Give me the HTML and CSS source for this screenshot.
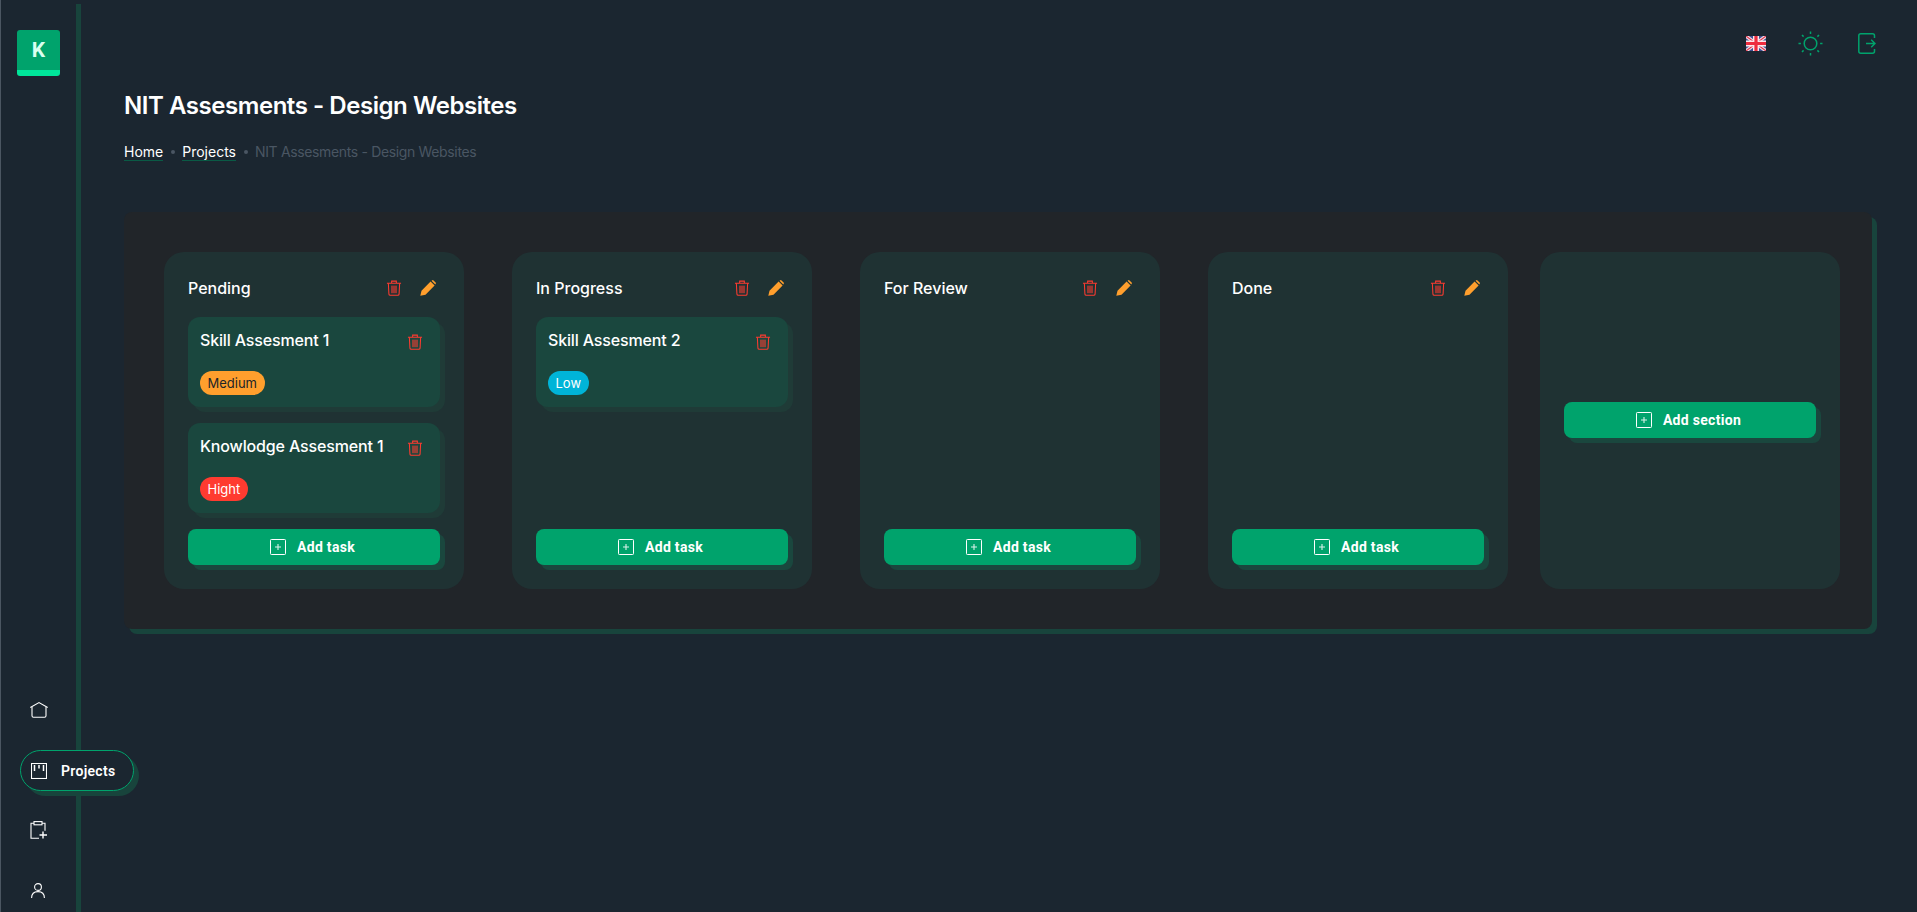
FILE: index.html
```html
<!DOCTYPE html>
<html lang="en">

<head>
    <meta charset="UTF-8">
    <meta name="viewport" content="width=device-width, initial-scale=1.0">
    <title>NIT Assesments - Design Websites</title>
    <link rel="stylesheet" href="styles.css">
</head>

<body>
    <svg class="sprite" xmlns="http://www.w3.org/2000/svg">
        <symbol id="i-trash" viewBox="0 0 16 17">
            <path d="M0.5 3.5h15M5.5 3.5V1.2h5v2.3" fill="none" stroke="currentColor" stroke-width="1.1" />
            <path d="M2 3.5l0.6 11.5q0.1 1.3 1.4 1.3h8q1.3 0 1.4-1.3L14 3.5" fill="none" stroke="currentColor" stroke-width="1.1" />
            <rect x="4.8" y="6" width="6.4" height="8" fill="currentColor" opacity="0.55" />
        </symbol>
        <symbol id="i-pencil" viewBox="0 0 16 16">
            <path d="M0.3 15.7l1.2-5L10.6 1.6l4 4-9.1 9.1zM11.5 0.7l0.9-0.5q0.6-0.3 1.1 0.2l2.1 2.1q0.5 0.5 0.2 1.1l-0.5 0.9z" fill="currentColor" />
        </symbol>
        <symbol id="i-plus" viewBox="0 0 16 16">
            <rect x="0.5" y="0.5" width="15" height="15" rx="0.8" fill="none" stroke="currentColor" />
            <path d="M8 5v6M5 8h6" stroke="currentColor" stroke-width="1.1" opacity="0.85" />
        </symbol>
    </svg>

    <div class="app">
        <aside class="sidebar">
            <div class="logo"><span>K</span></div>
            <nav class="menu">
                <a class="menu-item" href="#">
                    <svg class="menu-icon" viewBox="0 0 18 16" fill="none" stroke="currentColor" stroke-width="1.1">
                        <path d="M0.3 5.5L9 0.6l8.7 4.9" />
                        <path d="M2 5v8.8q0 1.5 1.5 1.5h11q1.5 0 1.5-1.5V5" />
                    </svg>
                </a>
                <a class="menu-item active" href="#">
                    <svg class="menu-icon" viewBox="0 0 16 16" fill="none" stroke="currentColor" stroke-width="1.1">
                        <rect x="0.5" y="0.5" width="15" height="15" />
                        <path d="M3.5 2v6M8 2v3.5M12.5 2v6" stroke-width="1.5" />
                    </svg>
                    <span>Projects</span>
                </a>
                <a class="menu-item" href="#">
                    <svg class="menu-icon" viewBox="0 0 18 18" fill="none" stroke="currentColor" stroke-width="1.1">
                        <path d="M4 2.2H1v15h8M12 2.2h3v7.5" />
                        <rect x="4" y="0.6" width="8" height="3.2" />
                        <path d="M13 10.5v7M9.5 14h7.5" stroke-width="1.4" />
                    </svg>
                </a>
                <a class="menu-item" href="#">
                    <svg class="menu-icon user" viewBox="0 0 14 15" fill="none" stroke="currentColor" stroke-width="1.1">
                        <circle cx="7" cy="4" r="3.4" />
                        <path d="M0.6 15q0-6.4 6.4-6.4T13.4 15" />
                    </svg>
                </a>
            </nav>
        </aside>

        <main class="content">
            <header class="topbar">
                <svg class="flag" viewBox="0 0 20 15">
                    <rect width="20" height="15" fill="#3d4f94" />
                    <path d="M0 0l20 15M20 0L0 15" stroke="#f3dbe3" stroke-width="3.4" />
                    <path d="M0 0l20 15M20 0L0 15" stroke="#e0364c" stroke-width="1.1" />
                    <path d="M10 0v15M0 7.5h20" stroke="#fbe7ea" stroke-width="6" />
                    <path d="M10 0v15M0 7.5h20" stroke="#ee2c3e" stroke-width="3.2" />
                </svg>
                <svg class="top-icon sun" viewBox="0 0 25 25" fill="none" stroke="currentColor">
                    <circle cx="12.5" cy="12.5" r="6.3" stroke-width="1.5" />
                    <path d="M12.5 0.5v2.4M12.5 22.1v2.4M0.5 12.5h2.4M22.1 12.5h2.4M4 4l1.6 1.6M19.4 19.4L21 21M4 21l1.6-1.6M19.4 5.6L21 4" stroke-width="1.5" />
                </svg>
                <svg class="top-icon exit" viewBox="0 0 18 21" fill="none" stroke="currentColor" stroke-width="1.5">
                    <path d="M16.5 5V2.8Q16.5 0.8 14.5 0.8H2.8Q0.8 0.8 0.8 2.8v15.4q0 2 2 2h11.7q2 0 2-2V16" />
                    <path d="M8 10.5h9M13.2 6.8l3.8 3.7-3.8 3.7" />
                </svg>
            </header>

            <h1 class="page-title">NIT Assesments - Design Websites</h1>
            <div class="breadcrumb">
                <a href="#">Home</a>
                <i></i>
                <a href="#">Projects</a>
                <i></i>
                <span>NIT Assesments - Design Websites</span>
            </div>

            <section class="board">
                <div class="column">
                    <div class="column-head">
                        <h2>Pending</h2>
                        <svg class="ic ic-del"><use href="#i-trash" /></svg>
                        <svg class="ic ic-edit"><use href="#i-pencil" /></svg>
                    </div>
                    <div class="tasks">
                        <div class="card">
                            <div class="card-head">
                                <h3>Skill Assesment 1</h3>
                                <svg class="ic ic-del"><use href="#i-trash" /></svg>
                            </div>
                            <span class="badge medium">Medium</span>
                        </div>
                        <div class="card">
                            <div class="card-head">
                                <h3>Knowlodge Assesment 1</h3>
                                <svg class="ic ic-del"><use href="#i-trash" /></svg>
                            </div>
                            <span class="badge hight">Hight</span>
                        </div>
                    </div>
                    <button class="btn"><svg class="ic"><use href="#i-plus" /></svg>Add task</button>
                </div>

                <div class="column">
                    <div class="column-head">
                        <h2>In Progress</h2>
                        <svg class="ic ic-del"><use href="#i-trash" /></svg>
                        <svg class="ic ic-edit"><use href="#i-pencil" /></svg>
                    </div>
                    <div class="tasks">
                        <div class="card">
                            <div class="card-head">
                                <h3>Skill Assesment 2</h3>
                                <svg class="ic ic-del"><use href="#i-trash" /></svg>
                            </div>
                            <span class="badge low">Low</span>
                        </div>
                    </div>
                    <button class="btn"><svg class="ic"><use href="#i-plus" /></svg>Add task</button>
                </div>

                <div class="column">
                    <div class="column-head">
                        <h2>For Review</h2>
                        <svg class="ic ic-del"><use href="#i-trash" /></svg>
                        <svg class="ic ic-edit"><use href="#i-pencil" /></svg>
                    </div>
                    <div class="tasks"></div>
                    <button class="btn"><svg class="ic"><use href="#i-plus" /></svg>Add task</button>
                </div>

                <div class="column">
                    <div class="column-head">
                        <h2>Done</h2>
                        <svg class="ic ic-del"><use href="#i-trash" /></svg>
                        <svg class="ic ic-edit"><use href="#i-pencil" /></svg>
                    </div>
                    <div class="tasks"></div>
                    <button class="btn"><svg class="ic"><use href="#i-plus" /></svg>Add task</button>
                </div>

                <div class="column column-add">
                    <button class="btn"><svg class="ic"><use href="#i-plus" /></svg>Add section</button>
                </div>
            </section>
        </main>
    </div>
</body>

</html>
```

FILE: styles.css
```css
* {
    box-sizing: border-box;
}

body {
    margin: 0;
    background-color: #1b2630;
    color: #ffffff;
    font-family: "Inter", "Liberation Sans", sans-serif;
    overflow: hidden;
}

a {
    color: inherit;
    text-decoration: none;
}

.sprite {
    display: none;
}

.app {
    display: flex;
    height: 912px;
}

/* barra lateral */
.sidebar {
    flex: none;
    width: 76px;
    padding: 30px 0 0 16px;
    display: flex;
    flex-direction: column;
    justify-content: space-between;
    border-left: 1px solid #4b5661;
    box-shadow: 5px 4px 0 #18443c;
}

.logo {
    width: 43px;
    height: 46px;
    border-radius: 3px;
    border-bottom: 6px solid #00e69a;
    background-color: #00a36c;
    display: flex;
    justify-content: center;
    padding-top: 7px;
    font-family: "Roboto", sans-serif;
    font-size: 21px;
    line-height: 26px;
    font-weight: 700;
    color: #d9fff0;
}

.menu {
    display: flex;
    flex-direction: column;
    margin-left: 3px;
    padding-bottom: 12px;
    gap: 40px;
}

.menu-item {
    display: flex;
    align-items: center;
    height: 20px;
    margin-left: 10px;
    gap: 14px;
    font-size: 14px;
    font-weight: 600;
    font-family: "Roboto", sans-serif;
    letter-spacing: 0.3px;
}

.menu-icon {
    width: 18px;
    height: 18px;
    flex: none;
}

.menu-icon.user {
    width: 14px;
    height: 15px;
    margin-left: 1px;
}

.menu-item.active {
    position: relative;
    z-index: 1;
    width: 114px;
    height: 41px;
    margin: -10px 0 -11px;
    padding-left: 10px;
    border: 1px solid #00a36c;
    border-radius: 21px;
    background-color: #1b2630;
    box-shadow: 5px 5px 0 #18443c;
}

.menu-item.active .menu-icon {
    width: 16px;
    height: 16px;
}

/* contenido */
.content {
    flex: 1;
    min-width: 0;
    padding: 0 45px 0 48px;
}

.topbar {
    display: flex;
    justify-content: flex-end;
    align-items: center;
    height: 33px;
    margin: 27px -4px 0 0;
    color: #00a36c;
}

.flag {
    width: 20px;
    height: 15px;
}

.top-icon.sun {
    width: 25px;
    height: 25px;
    margin-left: 32px;
}

.top-icon.exit {
    width: 18px;
    height: 21px;
    margin-left: 35px;
}

.page-title {
    margin: 31px 0 0;
    font-size: 24px;
    line-height: 30px;
    font-weight: 600;
    letter-spacing: -0.45px;
}

.breadcrumb {
    display: flex;
    align-items: center;
    margin-top: 21px;
    font-size: 14px;
    line-height: 20px;
}

.breadcrumb a {
    border-bottom: 1px solid #0a5a45;
    line-height: 17px;
}

.breadcrumb i {
    width: 4px;
    height: 4px;
    margin: 0 7.5px;
    border-radius: 50%;
    background-color: #4a5663;
}

.breadcrumb span {
    color: #4a5663;
    letter-spacing: -0.35px;
}

/* tablero */
.board {
    display: flex;
    gap: 48px;
    margin-top: 50px;
    padding: 40px;
    height: 417px;
    border-radius: 8px;
    background-color: #212529;
    box-shadow: 5px 5px 0 #18443c;
}

.column {
    flex: none;
    width: 300px;
    display: flex;
    flex-direction: column;
    padding: 24px;
    border-radius: 20px;
    background-color: #1f3233;
}

.column-add {
    margin-left: -16px;
    padding-bottom: 26px;
    justify-content: center;
}

.column-head {
    display: flex;
    align-items: center;
    height: 24px;
}

.column-head h2 {
    flex: 1;
    margin: 0;
    font-size: 16px;
    font-weight: 500;
}

.ic {
    width: 16px;
    height: 16px;
    flex: none;
}

.ic-del {
    color: #ff3b30;
}

.ic-edit {
    margin-left: 18px;
    margin-right: 4px;
    color: #ff9f2d;
}

.tasks {
    flex: 1;
    display: flex;
    flex-direction: column;
    gap: 16px;
    margin-top: 17px;
}

.card {
    height: 90px;
    padding: 12px;
    border-radius: 12px;
    background-color: #1a473e;
    box-shadow: 5px 5px 0 #1f3b37;
}

.card-head {
    display: flex;
    align-items: flex-start;
    justify-content: space-between;
    height: 42px;
    padding-right: 5px;
}

.card-head h3 {
    margin: 0;
    font-size: 16px;
    line-height: 22px;
    font-weight: 500;
    letter-spacing: -0.15px;
}

.card-head .ic {
    margin-top: 5px;
}

.badge {
    display: inline-block;
    height: 24px;
    padding: 0 7.5px;
    border-radius: 12px;
    font-size: 13px;
    line-height: 24px;
}

.medium {
    background-color: #ff9f2d;
    color: #212529;
}

.hight {
    background-color: #ff3b30;
}

.low {
    background-color: #00b4d8;
}

.btn {
    display: flex;
    align-items: center;
    justify-content: center;
    gap: 11px;
    width: 100%;
    height: 36px;
    flex: none;
    padding: 0 3px 0 0;
    border: none;
    border-radius: 8px;
    background-color: #00a36c;
    box-shadow: 5px 5px 0 #1a473e;
    color: #ffffff;
    font-family: "Roboto", sans-serif;
    font-size: 14px;
    font-weight: 700;
    letter-spacing: 0.3px;
}
```
